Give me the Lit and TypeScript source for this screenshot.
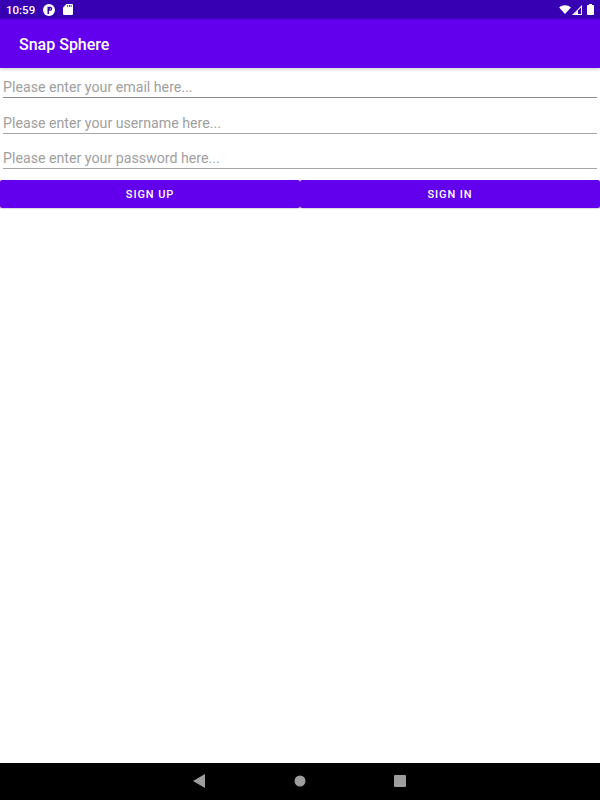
import { LitElement, html, css } from "lit";
import { customElement } from "lit/decorators.js";

@customElement("app-root")
export class AppRoot extends LitElement {
  static styles = css`
    :host {
      display: flex;
      flex-direction: column;
      width: 600px;
      height: 800px;
      background: #fff;
      font-family: Roboto, "Liberation Sans", sans-serif;
      overflow: hidden;
    }
    .status {
      height: 19px;
      flex: none;
      background: #3700b3;
      color: #fff;
      display: flex;
      align-items: center;
      padding: 0 6px;
      font-size: 11.5px;
      font-weight: 500;
    }
    .status .time {
      width: 29px;
    }
    .status svg {
      display: block;
    }
    .status .left {
      display: flex;
      align-items: center;
      gap: 8px;
    }
    .status .right {
      margin-left: auto;
      display: flex;
      align-items: center;
    }
    .status .signal {
      margin: 0 5px 0 1px;
    }
    .appbar {
      height: 49px;
      flex: none;
      box-sizing: border-box;
      background: #6200ee;
      color: #fff;
      display: flex;
      align-items: center;
      padding: 1px 19px 0;
      font-size: 16px;
      font-weight: 500;
      box-shadow: 0 2px 3px rgba(0, 0, 0, 0.14);
      position: relative;
    }
    .form {
      flex: 1;
      display: flex;
      flex-direction: column;
      padding-top: 10px;
    }
    .field {
      margin: 0 3px 15.5px;
      height: 19px;
      border-bottom: 1px solid #8a8a8a;
      font-size: 14.2px;
      line-height: 19px;
      color: #a0a0a0;
    }
    .field + .field {
      border-bottom-color: #a6a6a6;
    }
    .buttons {
      display: flex;
      margin-top: -4.5px;
    }
    .btn {
      flex: 1;
      height: 28px;
      box-sizing: border-box;
      padding-top: 1px;
      background: #6200ee;
      color: #fff;
      border-radius: 2px;
      display: flex;
      align-items: center;
      justify-content: center;
      font-size: 11px;
      font-weight: 500;
      letter-spacing: 0.9px;
      box-shadow: 0 1px 1px rgba(0, 0, 0, 0.15);
    }
    .nav {
      height: 37px;
      flex: none;
      box-sizing: border-box;
      background: #000;
      display: flex;
      align-items: center;
      justify-content: center;
      gap: 88.5px;
      padding: 0 1px 1px 0;
    }
    .nav svg {
      display: block;
      fill: #9e9e9e;
    }
  `;

  render() {
    return html`
      <div class="status">
        <div class="left">
          <span class="time">10:59</span>
          <svg width="12" height="12" viewBox="0 0 12 12">
            <circle cx="6" cy="6" r="6" fill="#fff"></circle>
            <path d="M4.500 2.800h1.500V10H4.500z" fill="#3700b3"></path>
            <path d="M6 2.800h1.200a2 2 0 0 1 0 4H6z" fill="#3700b3"></path>
            <path d="M6.800 4.200h.5a.6 .6 0 0 1 0 1.200h-.5z" fill="#fff"></path>
          </svg>
          <svg width="10" height="11" viewBox="0 0 10 11">
            <path d="M3.500 0H9a1 1 0 0 1 1 1v9a1 1 0 0 1-1 1H1a1 1 0 0 1-1-1V3.500z" fill="#fff"></path>
            <path d="M4.300 1h.8v2h-.8zM6 1h.8v2H6zM7.700 1h.8v2h-.8z" fill="#3700b3"></path>
          </svg>
        </div>
        <div class="right">
          <svg width="12" height="9" viewBox="0 0 13 10">
            <path d="M0 2.800C3.500-.6 9.500-.6 13 2.800L6.500 10z" fill="#fff"></path>
          </svg>
          <svg class="signal" width="10" height="10" viewBox="0 0 10 10">
            <path d="M10 0v10H0zM9 2.400L2.400 9H9z" fill="#fff" fill-rule="evenodd"></path>
            <path d="M6 5.400V9H2.400z" fill="#fff"></path>
          </svg>
          <svg width="7" height="11" viewBox="0 0 7 11">
            <path d="M2 0h3v1h1.200a.8 .8 0 0 1 .8 .8V10.200a.8 .8 0 0 1-.8 .8H.8a.8 .8 0 0 1-.8-.8V1.800a.8 .8 0 0 1 .8-.8H2z" fill="#fff"></path>
          </svg>
        </div>
      </div>
      <div class="appbar">Snap Sphere</div>
      <div class="form">
        <div class="field">Please enter your email here...</div>
        <div class="field">Please enter your username here...</div>
        <div class="field">Please enter your password here...</div>
        <div class="buttons">
          <div class="btn">SIGN UP</div>
          <div class="btn">SIGN IN</div>
        </div>
      </div>
      <div class="nav">
        <svg width="12" height="14" viewBox="0 0 12 14"><path d="M12 0v14L0 7z"></path></svg>
        <svg width="12" height="12" viewBox="0 0 12 12"><circle cx="6" cy="6" r="5.500"></circle></svg>
        <svg width="12" height="12" viewBox="0 0 12 12"><rect width="12" height="12" rx="1"></rect></svg>
      </div>
    `;
  }
}
